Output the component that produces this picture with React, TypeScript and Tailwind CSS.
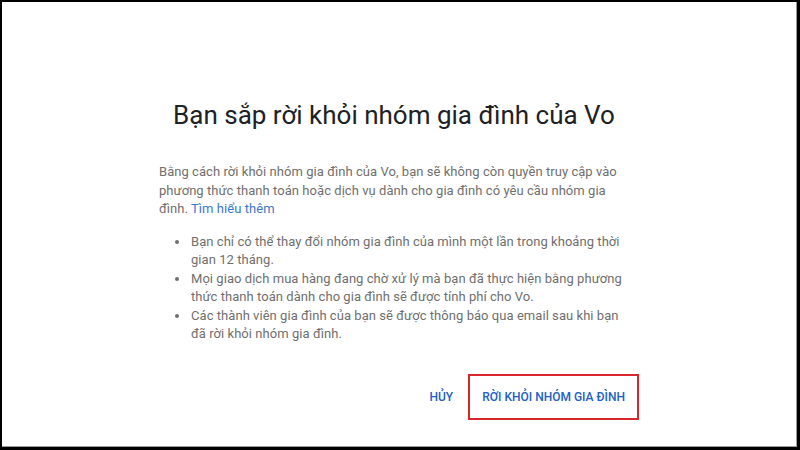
import React from 'react';

const bullets = [
  ['Bạn chỉ có thể thay đổi nhóm gia đình của mình một lần trong khoảng thời', 'gian 12 tháng.'],
  ['Mọi giao dịch mua hàng đang chờ xử lý mà bạn đã thực hiện bằng phương', 'thức thanh toán dành cho gia đình sẽ được tính phí cho Vo.'],
  ['Các thành viên gia đình của bạn sẽ được thông báo qua email sau khi bạn', 'đã rời khỏi nhóm gia đình.'],
];

const App = () => {
  return (
    <div
      className="w-[800px] h-[450px] bg-black pt-[2px] pl-[2px] pr-[3px] pb-[3px]"
      style={{ fontFamily: 'Roboto, "Noto Sans", sans-serif' }}
    >
      <div className="h-full bg-white border-r border-b border-[#9a9a9a]">
        <div className="w-[470px] ml-[157px] pt-[96px]">
          {/* Title */}
          <h1 className="text-center text-[26px] leading-[34px] text-[#202124]">
            Bạn sắp rời khỏi nhóm gia đình của Vo
          </h1>

          {/* Description */}
          <p className="mt-[31px] text-[13px] tracking-[0.05px] leading-[18.5px] text-[#6f6f6f] whitespace-nowrap">
            Bằng cách rời khỏi nhóm gia đình của Vo, bạn sẽ không còn quyền truy cập vào
            <br />
            phương thức thanh toán hoặc dịch vụ dành cho gia đình có yêu cầu nhóm gia
            <br />
            đình.{' '}
            <a href="#" className="text-[#3b78c9]">
              Tìm hiểu thêm
            </a>
          </p>

          <ul className="mt-[14px] pl-[31px] list-disc text-[13px] tracking-[0.05px] leading-[18.5px] text-[#6f6f6f] marker:text-[#6f6f6f] whitespace-nowrap">
            {bullets.map((lines, index) => (
              <li key={index} className="pl-[1px]">
                {lines[0]}
                <br />
                {lines[1]}
              </li>
            ))}
          </ul>

          {/* Actions */}
          <div className="mt-[30px] mr-[-10px] flex items-center justify-end gap-[15px]">
            <button className="text-[12px] font-medium text-[#2160c6]">HỦY</button>
            <button className="h-[46px] px-[12px] border-2 border-[#d9252b] text-[12px] font-medium text-[#2160c6]">
              RỜI KHỎI NHÓM GIA ĐÌNH
            </button>
          </div>
        </div>
      </div>
    </div>
  );
};

export default App;
